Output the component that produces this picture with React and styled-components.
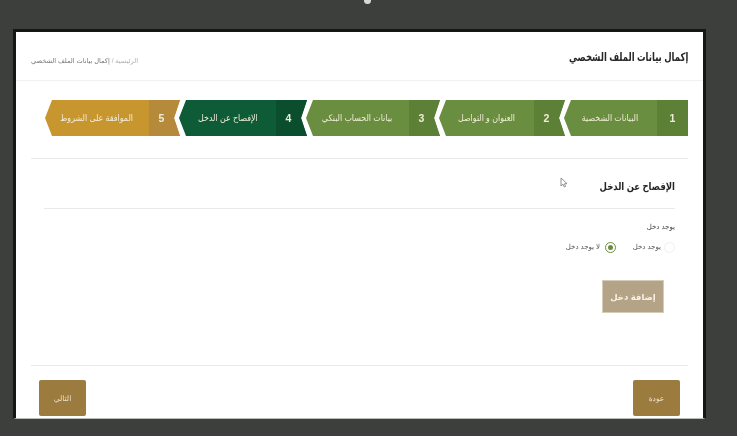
import React from 'react';
import styled, { createGlobalStyle } from 'styled-components';

const GlobalStyle = createGlobalStyle`
  html, body {
    margin: 0;
    height: 100%;
    background: #3d3f3c;
  }
  * { box-sizing: border-box; }
`

const Screen = styled.div`
  position: relative;
  width: 737px;
  height: 436px;
  padding: 29px 31px 15px 13px;
  overflow: hidden;
  background: #3d3f3c;
  font-family: "Liberation Sans", "DejaVu Sans", sans-serif;
  direction: rtl;
`

const CameraDot = styled.div`
  position: absolute;
  top: -3px;
  left: 364px;
  width: 7px;
  height: 7px;
  border-radius: 50%;
  background: #d8d8d8;
`

const Panel = styled.div`
  width: 693px;
  height: 390px;
  display: flex;
  flex-direction: column;
  background: #fff;
  border: solid #151715;
  border-width: 3px 3px 1px 3px;
  border-bottom-color: #bbb;
  filter: blur(0.45px);
`

const Header = styled.div`
  height: 49px;
  flex: none;
  display: flex;
  align-items: center;
  justify-content: space-between;
  padding: 0 15px;
  border-bottom: 1px solid #f1f1f1;
`

const Title = styled.h1`
  margin: 2px 0 0;
  font-size: 11.5px;
  font-weight: 700;
  color: #262626;
  transform: scaleX(0.74);
  transform-origin: right center;
`

const Breadcrumb = styled.div`
  margin-top: 9px;
  font-size: 6.6px;
  color: #777;
  span { color: #b0b0b0; }
`

const Stepper = styled.div`
  display: flex;
  height: 36px;
  margin: 19px 15px 0;
`

const Step = styled.div`
  flex: none;
  width: ${p => p.$w}px;
  margin-left: -1px;
  display: flex;
  align-items: stretch;
  color: #f1ecd8;
  background: ${p => p.$bg};
  clip-path: ${p => p.$first
    ? 'polygon(100% 0, 100% 100%, 7px 100%, 0 50%, 7px 0)'
    : 'polygon(100% 0, calc(100% - 6px) 50%, 100% 100%, 7px 100%, 0 50%, 7px 0)'};
`

const StepNumber = styled.div`
  flex: none;
  width: 31px;
  padding-right: ${p => p.$first ? 0 : 6}px;
  display: flex;
  align-items: center;
  justify-content: center;
  font-size: 10.5px;
  font-weight: 700;
  background: ${p => p.$bg};
`

const StepLabel = styled.div`
  flex: 1;
  display: flex;
  align-items: center;
  justify-content: center;
  font-size: 9px;
  white-space: nowrap;
  span {
    display: block;
    transform: scaleX(0.88);
  }
`

const Divider = styled.div`
  flex: none;
  height: 1px;
  margin: ${p => p.$m};
  background: ${p => p.$c || '#e9e9e9'};
`

const Section = styled.div`
  flex: 1;
  display: flex;
  flex-direction: column;
  padding: 0 28px;
`

const SectionTitle = styled.h2`
  height: 49px;
  margin: 0;
  padding-top: 4px;
  display: flex;
  align-items: center;
  font-size: 10.5px;
  font-weight: 700;
  color: #262626;
  transform: scaleX(0.81);
  transform-origin: right center;
`

const FieldLabel = styled.div`
  margin-top: 14px;
  font-size: 7px;
  color: #444;
`

const RadioRow = styled.div`
  display: flex;
  align-items: center;
  height: 14px;
  margin-top: 9px;
`

const RadioOption = styled.div`
  width: ${p => p.$w}px;
  flex: none;
  display: flex;
  align-items: center;
  gap: ${p => p.$gap}px;
  font-size: 7px;
  color: #555;
`

const RadioMark = styled.span`
  flex: none;
  width: 11px;
  height: 11px;
  border-radius: 50%;
  border: 1px solid ${p => p.$on ? '#6b8e3e' : '#f0f0f0'};
  display: flex;
  align-items: center;
  justify-content: center;
  &::after {
    content: '';
    width: 5px;
    height: 5px;
    border-radius: 50%;
    background: ${p => p.$on ? '#6b8e3e' : 'transparent'};
  }
`

const AddButton = styled.button`
  align-self: flex-start;
  width: 62px;
  height: 33px;
  margin: 26px 11px 0 0;
  border: 1px solid #d5ccb8;
  background: #b4a386;
  color: #f7f2e4;
  font: 700 8.5px "Liberation Sans", "DejaVu Sans", sans-serif;
`

const Footer = styled.div`
  display: flex;
  justify-content: space-between;
  padding: 14px 23px 0;
  height: 52px;
`

const NavButton = styled.button`
  width: 47px;
  height: 36px;
  border: none;
  border-radius: 2px;
  background: #9c7b3f;
  color: #ecdfc6;
  font: 400 7.5px "Liberation Sans", "DejaVu Sans", sans-serif;
`

const Cursor = styled.svg`
  position: absolute;
  top: 177px;
  left: 560px;
`

const steps = [
  { n: 1, label: 'البيانات الشخصية', w: 124, bg: '#6a8e3f', dark: '#5d8037', first: true },
  { n: 2, label: 'العنوان و التواصل', w: 126, bg: '#6a8e3f', dark: '#5d8037' },
  { n: 3, label: 'بيانات الحساب البنكي', w: 134, bg: '#6a8e3f', dark: '#5d8037' },
  { n: 4, label: 'الإفصاح عن الدخل', w: 128, bg: '#0e5c37', dark: '#0a4e2d' },
  { n: 5, label: 'الموافقة على الشروط', w: 135, bg: '#c8962f', dark: '#b58a3b' },
];

const App = () => {
  return (
    <Screen>
      <GlobalStyle />
      <CameraDot />
      <Panel>
        <Header>
          <Title>إكمال بيانات الملف الشخصي</Title>
          <Breadcrumb><span>الرئيسية /</span> إكمال بيانات الملف الشخصي</Breadcrumb>
        </Header>
        <Stepper>
          {steps.map(s => (
            <Step key={s.n} $w={s.w} $bg={s.bg} $first={s.first}>
              <StepNumber $bg={s.dark} $first={s.first}>{s.n}</StepNumber>
              <StepLabel><span>{s.label}</span></StepLabel>
            </Step>
          ))}
        </Stepper>
        <Divider $m="22px 15px 0" />
        <Section>
          <SectionTitle>الإفصاح عن الدخل</SectionTitle>
          <Divider $m="0" />
          <FieldLabel>يوجد دخل</FieldLabel>
          <RadioRow>
            <RadioOption $w={59} $gap={3}><RadioMark />يوجد دخل</RadioOption>
            <RadioOption $w={60} $gap={5}><RadioMark $on />لا يوجد دخل</RadioOption>
          </RadioRow>
          <AddButton>إضافة دخل</AddButton>
        </Section>
        <Divider $m="0 15px" />
        <Footer>
          <NavButton>عودة</NavButton>
          <NavButton>التالي</NavButton>
        </Footer>
      </Panel>
      <Cursor width="8" height="11" viewBox="0 0 8 11">
        <path d="M1 1 L1 9 L3 7.2 L4.4 10 L5.6 9.4 L4.4 6.8 L7 6.6 Z" fill="#fff" stroke="#777" strokeWidth="0.8" />
      </Cursor>
    </Screen>
  );
}

export default App;
